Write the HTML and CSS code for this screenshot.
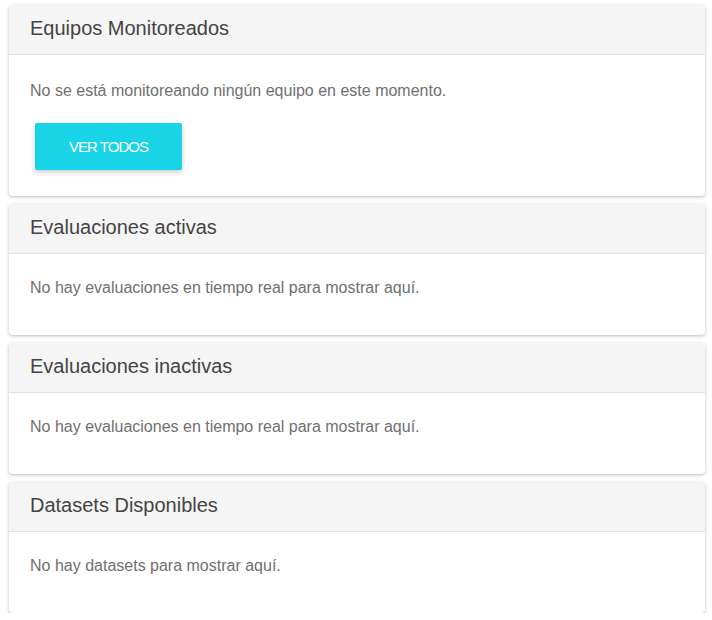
FILE: index.html
```html
<!DOCTYPE html>
<html lang="es">
<head>
<meta charset="utf-8">
<title>Panel</title>
<link rel="stylesheet" href="styles.css">
</head>
<body>
<main class="stack">
  <section class="card">
    <header class="card-header">Equipos Monitoreados</header>
    <div class="card-body card-body--action">
      <p class="empty">No se está monitoreando ningún equipo en este momento.</p>
      <button class="btn" type="button">VER TODOS</button>
    </div>
  </section>
  <section class="card">
    <header class="card-header">Evaluaciones activas</header>
    <div class="card-body">
      <p class="empty">No hay evaluaciones en tiempo real para mostrar aquí.</p>
    </div>
  </section>
  <section class="card">
    <header class="card-header">Evaluaciones inactivas</header>
    <div class="card-body">
      <p class="empty">No hay evaluaciones en tiempo real para mostrar aquí.</p>
    </div>
  </section>
  <section class="card">
    <header class="card-header">Datasets Disponibles</header>
    <div class="card-body">
      <p class="empty">No hay datasets para mostrar aquí.</p>
    </div>
  </section>
</main>
</body>
</html>
```

FILE: styles.css
```css
html, body {
  margin: 0;
  padding: 0;
  background: #ffffff;
}

body {
  font-family: "Liberation Sans", Arial, sans-serif;
  color: #333333;
}

.stack {
  display: flex;
  flex-direction: column;
  gap: 8px;
  padding: 5px 7px 0 9px;
}

.card {
  background: #ffffff;
  border-radius: 4px;
  box-shadow: 0 1px 4px rgba(0, 0, 0, 0.18), 0 1px 2px rgba(0, 0, 0, 0.10);
  overflow: hidden;
}

.card-header {
  background: #f5f5f5;
  border-bottom: 1px solid #e2e2e2;
  height: 50px;
  box-sizing: border-box;
  display: flex;
  align-items: center;
  padding: 0 21px 2px;
  font-size: 20px;
  color: #444444;
}

.card-body {
  padding: 24px 21px 0;
  height: 81px;
  box-sizing: border-box;
}

.card-body--action {
  height: 141px;
  padding-top: 26px;
}

.empty {
  margin: 0;
  font-size: 16px;
  line-height: 20px;
  color: #707070;
}

.btn {
  display: block;
  margin: 22px 0 0 5px;
  width: 147px;
  height: 47px;
  padding: 0;
  border: none;
  border-radius: 2px;
  background: #19d3e6;
  color: #ffffff;
  font-family: "Liberation Sans", Arial, sans-serif;
  font-size: 15px;
  letter-spacing: -1px;
  box-shadow: 0 2px 5px rgba(0, 0, 0, 0.22);
}
```
